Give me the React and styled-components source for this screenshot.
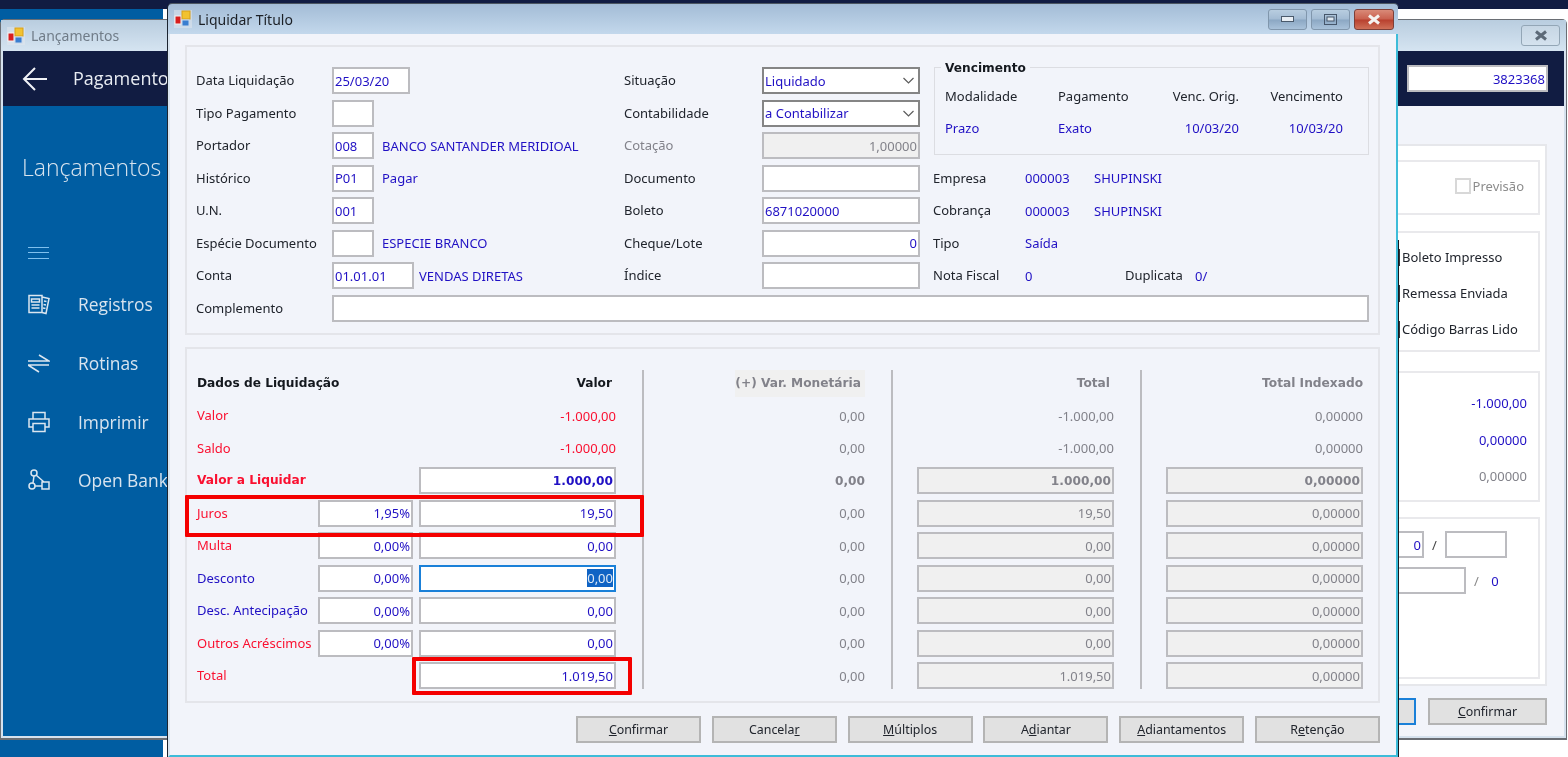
import React from "react";
import styled, { createGlobalStyle, css } from "styled-components";

const BLUE_TEXT = "#2010c4";
const RED_TEXT = "#fa1030";
const GREY_TEXT = "#82828a";
const DARK_TEXT = "#20242c";

const boldText = css`
  font-family: "DejaVu Sans", sans-serif;
  font-size: 12.2px;
  font-weight: 700;
`;

const GlobalStyle = createGlobalStyle`
  html, body {
    margin: 0;
    padding: 0;
    background: #fff;
  }
  body {
    font-family: "Noto Sans", "DejaVu Sans", sans-serif;
    font-size: 13px;
    color: ${DARK_TEXT};
  }
`;

const Desktop = styled.div`
  position: relative;
  width: 1568px;
  height: 757px;
  overflow: hidden;
  display: flex;
  flex-direction: column;
  background: #fff;
  filter: blur(0.35px);
`;

const TopBand = styled.div`
  height: 9px;
  background: #111c42;
`;

const BlueFill = styled.div`
  flex: 1;
  width: 163px;
  background: #005da2;
`;

/* ---- janela de trás ---- */

const BackWindow = styled.div`
  position: absolute;
  left: 0;
  top: 19px;
  width: 1567px;
  height: 721px;
  box-sizing: border-box;
  display: flex;
  flex-direction: column;
  border: 1px solid #6a6e74;
  border-bottom-width: 2px;
  border-radius: 5px 5px 0 0;
  background: #d6e2ee;
  padding: 0 2px 2px;
`;

const BackTitleBar = styled.div`
  height: 31px;
  margin: 0 -2px;
  padding: 0 6px 0 6px;
  display: flex;
  align-items: center;
  gap: 6px;
  background: linear-gradient(#b9cddf, #d5e4f1);
  color: #707c88;
  font-size: 14px;
`;

const WinButton = styled.div`
  width: ${(p) => p.$w || 39}px;
  height: 21px;
  box-sizing: border-box;
  display: flex;
  align-items: center;
  justify-content: center;
  border: 1px solid #8096ac;
  border-radius: 3px;
  background: linear-gradient(#b8cde0 0, #a3bbd3 48%, #8ba7c3 52%, #a9c2da 100%);
`;

const CloseButton = styled(WinButton)`
  border-color: #7d3f38;
  background: linear-gradient(#d98a78 0, #c9604e 48%, #b8402e 52%, #cf7058 100%);
`;

const InactiveButton = styled(WinButton)`
  border-color: #93a6b6;
  background: linear-gradient(#c6d6e4, #d4e2ee);
`;

const BackHeader = styled.div`
  height: 55px;
  flex: none;
  padding: 0 16px 0 19px;
  display: flex;
  align-items: center;
  background: #111c42;
  color: #e8ecf2;
`;

const BackHeaderTitle = styled.div`
  margin: -2px 0 0 25px;
  font-family: "Open Sans", sans-serif;
  font-size: 18px;
  flex: 1;
`;

const Sidebar = styled.div`
  width: 300px;
  flex: none;
  box-sizing: border-box;
  padding: 44px 0 0 19px;
  background: #005da2;
  color: #d8e4ef;
`;

const SidebarTitle = styled.div`
  font-family: "Open Sans", sans-serif;
  font-weight: 300;
  font-size: 23px;
  line-height: 34px;
`;

const MenuBars = styled.div`
  margin: 63px 0 16px 6px;
  width: 21px;
  height: 12px;
  border-top: 1px solid #7fc0ee;
  border-bottom: 1px solid #7fc0ee;
  box-sizing: border-box;
  position: relative;
  &::after {
    content: "";
    position: absolute;
    left: 0;
    right: 0;
    top: 4px;
    height: 1px;
    background: #7fc0ee;
  }
`;

const MenuItem = styled.div`
  height: 58.7px;
  display: flex;
  align-items: center;
  gap: 28px;
  padding-left: 6px;
  font-family: "Open Sans", sans-serif;
  font-size: 17.4px;
`;

const BackBody = styled.div`
  flex: 1;
  display: flex;
  min-height: 0;
`;

const BackContent = styled.div`
  flex: 1;
  min-width: 0;
  box-sizing: border-box;
  padding: 38px 17px 0 0;
  display: flex;
  flex-direction: column;
  align-items: flex-end;
  background: #f2f4fa;
`;

const WhitePanel = styled.div`
  width: 400px;
  height: 542px;
  box-sizing: border-box;
  border: 2px solid #e6e7eb;
  background: #fff;
  padding: 14px 5px 0 0;
  display: flex;
  flex-direction: column;
`;

const WhiteGroup = styled.div`
  height: ${(p) => p.$h}px;
  margin-bottom: ${(p) => p.$mb || 0}px;
  box-sizing: border-box;
  border: 2px solid #e9e9ec;
  flex: none;
`;

const PrevisaoRow = styled.div`
  height: 100%;
  box-sizing: border-box;
  display: flex;
  justify-content: flex-end;
  align-items: center;
  gap: 2px;
  padding: 0 14px 4px 0;
  color: #8c8c8c;
`;

const PrevisaoBox = styled.div`
  width: 16px;
  height: 16px;
  box-sizing: border-box;
  border: 2px solid #d8d8d8;
`;

const CheckRow = styled.div`
  height: 36px;
  display: flex;
  align-items: center;
  padding-left: 233px;
  &:first-child {
    margin-top: 6px;
  }
`;

const CheckEdge = styled.div`
  width: 14px;
  height: 17px;
  margin-right: 2px;
  border-right: 2px solid #2e3238;
`;

const AmountRow = styled.div`
  height: 36.5px;
  display: flex;
  align-items: center;
  justify-content: flex-end;
  padding-right: 11px;
  color: ${(p) => p.$color};
  &:first-child {
    margin-top: 12px;
  }
`;

const ParcelRow = styled.div`
  display: flex;
  align-items: center;
  justify-content: flex-end;
  height: 27px;
  margin-top: ${(p) => p.$mt}px;
  padding-right: ${(p) => p.$pr}px;
`;

const Slash = styled.div`
  width: ${(p) => p.$w}px;
  text-align: center;
  color: ${(p) => p.$color || "#444"};
`;

const BackFooter = styled.div`
  display: flex;
  gap: 12px;
  margin-top: 12px;
`;

/* ---- diálogo ---- */

const Dialog = styled.div`
  position: absolute;
  left: 167px;
  top: 3px;
  width: 1232px;
  height: 754px;
  box-sizing: border-box;
  display: flex;
  flex-direction: column;
  padding-right: 1px;
  border-left: 1px solid #1b2430;
  border-top: 1px solid #4a5560;
  border-radius: 5px 5px 0 0;
  background: linear-gradient(transparent 236px, #14181e 236px);
`;

const TitleBar = styled.div`
  height: 30px;
  flex: none;
  padding: 0 4px 0 6px;
  display: flex;
  align-items: center;
  gap: 6px;
  border-radius: 4px 4px 0 0;
  background: linear-gradient(#a3bcd6, #c3d8ec);
  font-size: 14px;
  color: #1c2026;
`;

const TitleText = styled.div`
  flex: 1;
`;

const TitleButtons = styled.div`
  display: flex;
  gap: 4px;
`;

const DialogBody = styled.div`
  flex: 1;
  min-height: 0;
  box-sizing: border-box;
  padding: 11px 16px 0 15px;
  border-left: 2px solid #d9e5f0;
  border-right: 2px solid #3dbcd9;
  border-bottom: 2px solid #3dbcd9;
  background: #f2f4fa;
  display: flex;
  flex-direction: column;
`;

const Panel = styled.div`
  position: relative;
  flex: none;
  box-sizing: border-box;
  border: 2px solid #e4e5ea;
`;

const UpperPanel = styled(Panel)`
  height: 290px;
  padding: 20px 0 0 9px;
`;

const LowerPanel = styled(Panel)`
  height: 356px;
  margin-top: 12px;
  padding: 20.5px 0 0 10px;
`;

const TopColumns = styled.div`
  display: flex;
`;

const FormColumn = styled.div`
  width: ${(p) => p.$w}px;
  flex: none;
  display: flex;
  flex-direction: column;
  gap: 5.5px;
`;

const FormRow = styled.div`
  height: 27px;
  display: flex;
  align-items: center;
`;

const ComplementRow = styled(FormRow)`
  margin-top: 5.5px;
  width: 1173px;
`;

const FormLabel = styled.div`
  width: ${(p) => p.$w}px;
  flex: none;
  margin-top: -1px;
  white-space: nowrap;
  color: ${(p) => p.$color || DARK_TEXT};
`;

const Field = styled.div`
  width: ${(p) => (p.$w ? `${p.$w}px` : "auto")};
  flex: ${(p) => (p.$w ? "none" : 1)};
  margin-left: ${(p) => p.$ml || 0}px;
  height: 27px;
  box-sizing: border-box;
  display: flex;
  align-items: center;
  justify-content: ${(p) => (p.$right ? "flex-end" : "flex-start")};
  padding: 0 1px;
  border: 2px solid ${(p) => (p.$focus ? "#1a80d8" : "#bcbcc0")};
  background: ${(p) => (p.$off ? "#f0f0f0" : "#fff")};
  color: ${(p) => (p.$off ? GREY_TEXT : BLUE_TEXT)};
  white-space: nowrap;
  ${(p) => p.$bold && boldText}
`;

const Selected = styled.span`
  background: #0f63c4;
  color: #dfeaf6;
`;

const Combo = styled(Field)`
  border-color: #858585;
  justify-content: space-between;
`;

const ComboArrow = styled.svg`
  width: 11px;
  height: 7px;
  margin-right: 3px;
`;

const FieldNote = styled.div`
  margin-left: ${(p) => p.$ml}px;
  color: ${BLUE_TEXT};
  white-space: nowrap;
`;

const GroupBox = styled.div`
  position: relative;
  height: 88px;
  margin-bottom: 4px;
  margin-left: 1px;
  box-sizing: border-box;
  border: 1px solid #dcdde2;
  padding: 14px 0 0 10px;
  display: grid;
  grid-template-columns: 113px 67px 114px 104px;
  grid-auto-rows: 27px;
  row-gap: 5.5px;
  align-items: center;
`;

const GroupTitle = styled.div`
  ${boldText}
  position: absolute;
  left: 6px;
  top: -7px;
  padding: 0 4px;
  background: #f2f4fa;
  color: #14181e;
`;

const GroupCell = styled.div`
  text-align: ${(p) => (p.$right ? "right" : "left")};
  color: ${(p) => p.$color || DARK_TEXT};
  white-space: nowrap;
`;

const InfoValue = styled.div`
  width: ${(p) => p.$w}px;
  flex: none;
  color: ${BLUE_TEXT};
  white-space: nowrap;
`;

const LowerColumns = styled.div`
  display: flex;
`;

const DataColumn = styled.div`
  width: 249px;
  flex: none;
  box-sizing: border-box;
  padding: 0 26px 0 24px;
  border-left: 2px solid #bcbcc0;
  display: flex;
  flex-direction: column;
  gap: 5.5px;
`;

const FirstColumn = styled(DataColumn)`
  width: 445px;
  padding: 0 26px 0 0;
  border-left: none;
`;

const DataRow = styled.div`
  height: 27px;
  display: flex;
  align-items: center;
  justify-content: flex-end;
  color: ${(p) => p.$color || GREY_TEXT};
  ${(p) => p.$bold && boldText}
`;

const RowGrow = styled.div`
  flex: 1;
  margin-top: -1px;
  white-space: nowrap;
  color: ${(p) => p.$color};
  ${(p) => p.$bold && boldText}
`;

const ValueHead = styled.div`
  ${boldText}
  padding-right: 4px;
  color: ${(p) => p.$color || "#14181e"};
`;

const VarHead = styled.div`
  height: 27px;
  display: flex;
  align-items: center;
  padding: 0 4px 0 0;
  background: #f0f0f0;
`;

const RedBox = styled.div`
  position: absolute;
  left: ${(p) => p.$x}px;
  top: ${(p) => p.$y}px;
  width: ${(p) => p.$w}px;
  height: ${(p) => p.$h}px;
  box-sizing: border-box;
  border: 4px solid #f40000;
  border-radius: 1px;
`;

const ButtonBar = styled.div`
  margin-top: 13px;
  display: flex;
  justify-content: space-between;
  padding-left: 391px;
`;

const ActionButton = styled.button`
  width: ${(p) => p.$w || 125}px;
  height: 27px;
  padding: 0;
  box-sizing: border-box;
  border: 2px solid ${(p) => (p.$focus ? "#1a80d8" : "#b4b4b4")};
  background: #e1e1e1;
  color: #20242c;
  font-family: inherit;
  font-size: 12.4px;
`;

const AppIcon = () => (
  <svg width="18" height="18" viewBox="0 0 18 18">
    <rect x="0" y="0" width="18" height="18" fill="#e4e8ee" opacity="0.5" />
    <rect x="1" y="6" width="6" height="8" fill="#d81e1e" stroke="#f4f4f4" />
    <rect x="8" y="1" width="8" height="8" fill="#f2c230" stroke="#d8a018" />
    <rect x="8" y="10" width="7" height="6" fill="#3a7ed0" stroke="#c8d8ec" />
  </svg>
);

const CloseGlyph = ({ color }) => (
  <svg width="14" height="11" viewBox="0 0 14 11">
    <path d="M2 1.5L12 9.5M12 1.5L2 9.5" stroke={color} strokeWidth="3" />
  </svg>
);

const MinGlyph = () => (
  <svg width="13" height="6" viewBox="0 0 13 6">
    <rect x="0.5" y="0.5" width="12" height="5" fill="#e8eef4" stroke="#4a5a6c" />
  </svg>
);

const MaxGlyph = () => (
  <svg width="13" height="11" viewBox="0 0 13 11">
    <rect x="0.5" y="0.5" width="12" height="10" fill="none" stroke="#46566a" />
    <rect x="3" y="3" width="7" height="4" fill="#dfe8f0" stroke="#46566a" />
  </svg>
);

const BackArrow = () => (
  <svg width="26" height="26" viewBox="0 0 26 26" fill="none" stroke="#f0f2f6" strokeWidth="2">
    <path d="M25 13H2M13 2L2 13l11 11" />
  </svg>
);

const iconProps = {
  width: 22,
  height: 22,
  viewBox: "0 0 22 22",
  fill: "none",
  stroke: "#dbe6f0",
  strokeWidth: 1.5,
};

const RegistrosIcon = () => (
  <svg {...iconProps}>
    <path d="M1 2.5h13v17H1zM14 4l7 1.5-3 15-4-1" />
    <path d="M3.5 6h8v3h-8zM3.5 12h8M3.5 15h8M16 8l2.5.5M15.5 11.5l2.5.5M15 15l2.5.5" />
  </svg>
);

const RotinasIcon = () => (
  <svg {...iconProps}>
    <path d="M0 9h21L11 3M21 13H0l11 7" />
  </svg>
);

const ImprimirIcon = () => (
  <svg {...iconProps}>
    <path d="M5 8V1.5h12V8M5 16H1V8h20v8h-4" />
    <path d="M5 12.5h12v8H5z" />
  </svg>
);

const OpenBankIcon = () => (
  <svg {...iconProps}>
    <circle cx="6" cy="4" r="3" />
    <circle cx="4" cy="17" r="3" />
    <path d="M7 17h7M14 13h7v7h-7zM8 6l8 7M6 7l-1 7" />
  </svg>
);

const Chevron = () => (
  <ComboArrow viewBox="0 0 11 7" fill="none" stroke="#5c5c5c" strokeWidth="1.2">
    <path d="M0.5 1l5 5 5-5" />
  </ComboArrow>
);

const leftRows = [
  { label: "Data Liquidação", value: "25/03/20", w: 78 },
  { label: "Tipo Pagamento", value: "", w: 42 },
  { label: "Portador", value: "008", w: 42, note: "BANCO SANTANDER MERIDIOAL", ml: 8 },
  { label: "Histórico", value: "P01", w: 42, note: "Pagar", ml: 8 },
  { label: "U.N.", value: "001", w: 42 },
  { label: "Espécie Documento", value: "", w: 42, note: "ESPECIE BRANCO", ml: 8 },
  { label: "Conta", value: "01.01.01", w: 82, note: "VENDAS DIRETAS", ml: 5 },
];

const sideRows = [
  { label: "Juros", color: RED_TEXT, pct: "1,95%", value: "19,50", total: "19,50" },
  { label: "Multa", color: RED_TEXT, pct: "0,00%", value: "0,00", total: "0,00" },
  { label: "Desconto", color: BLUE_TEXT, pct: "0,00%", value: "0,00", total: "0,00", focus: true },
  { label: "Desc. Antecipação", color: BLUE_TEXT, pct: "0,00%", value: "0,00", total: "0,00" },
  { label: "Outros Acréscimos", color: RED_TEXT, pct: "0,00%", value: "0,00", total: "0,00" },
];

const OffFieldRow = ({ value, bold }) => (
  <DataRow>
    <Field $off $right $bold={bold}>
      {value}
    </Field>
  </DataRow>
);

const BackWindowView = () => (
  <BackWindow>
    <BackTitleBar>
      <AppIcon />
      <TitleText>Lançamentos</TitleText>
      <InactiveButton>
        <CloseGlyph color="#5c6a78" />
      </InactiveButton>
    </BackTitleBar>
    <BackHeader>
      <BackArrow />
      <BackHeaderTitle>Pagamentos</BackHeaderTitle>
      <Field $w={141} $right>
        3823368
      </Field>
    </BackHeader>
    <BackBody>
      <Sidebar>
        <SidebarTitle>Lançamentos</SidebarTitle>
        <MenuBars />
        <MenuItem>
          <RegistrosIcon />
          Registros
        </MenuItem>
        <MenuItem>
          <RotinasIcon />
          Rotinas
        </MenuItem>
        <MenuItem>
          <ImprimirIcon />
          Imprimir
        </MenuItem>
        <MenuItem>
          <OpenBankIcon />
          Open Banking
        </MenuItem>
      </Sidebar>
      <BackContent>
        <WhitePanel>
          <WhiteGroup $h={55} $mb={16}>
            <PrevisaoRow>
              <PrevisaoBox />
              Previsão
            </PrevisaoRow>
          </WhiteGroup>
          <WhiteGroup $h={121} $mb={19}>
            <CheckRow>
              <CheckEdge />
              Boleto Impresso
            </CheckRow>
            <CheckRow>
              <CheckEdge />
              Remessa Enviada
            </CheckRow>
            <CheckRow>
              <CheckEdge />
              Código Barras Lido
            </CheckRow>
          </WhiteGroup>
          <WhiteGroup $h={131} $mb={15}>
            <AmountRow $color={BLUE_TEXT}>-1.000,00</AmountRow>
            <AmountRow $color={BLUE_TEXT}>0,00000</AmountRow>
            <AmountRow $color={GREY_TEXT}>0,00000</AmountRow>
          </WhiteGroup>
          <WhiteGroup $h={162}>
            <ParcelRow $mt={12} $pr={31}>
              <Field $w={100} $right>
                0
              </Field>
              <Slash $w={21}>/</Slash>
              <Field $w={62} />
            </ParcelRow>
            <ParcelRow $mt={9} $pr={35}>
              <Field $w={100} />
              <Slash $w={21} $color="#888">
                /
              </Slash>
              <Slash $w={16} $color={BLUE_TEXT}>
                0
              </Slash>
            </ParcelRow>
          </WhiteGroup>
        </WhitePanel>
        <BackFooter>
          <ActionButton $w={119} $focus />
          <ActionButton $w={119}>
            <u>C</u>onfirmar
          </ActionButton>
        </BackFooter>
      </BackContent>
    </BackBody>
  </BackWindow>
);

const App = () => (
  <Desktop>
    <GlobalStyle />
    <TopBand />
    <BlueFill />
    <BackWindowView />
    <Dialog>
      <TitleBar>
        <AppIcon />
        <TitleText>Liquidar Título</TitleText>
        <TitleButtons>
          <WinButton>
            <MinGlyph />
          </WinButton>
          <WinButton>
            <MaxGlyph />
          </WinButton>
          <CloseButton $w={40}>
            <CloseGlyph color="#f4f2f0" />
          </CloseButton>
        </TitleButtons>
      </TitleBar>
      <DialogBody>
        <UpperPanel>
          <TopColumns>
            <FormColumn $w={428}>
              {leftRows.map((row) => (
                <FormRow key={row.label}>
                  <FormLabel $w={136}>{row.label}</FormLabel>
                  <Field $w={row.w}>{row.value}</Field>
                  {row.note && <FieldNote $ml={row.ml}>{row.note}</FieldNote>}
                </FormRow>
              ))}
            </FormColumn>
            <FormColumn $w={309}>
              <FormRow>
                <FormLabel $w={138}>Situação</FormLabel>
                <Combo $w={158}>
                  Liquidado
                  <Chevron />
                </Combo>
              </FormRow>
              <FormRow>
                <FormLabel $w={138}>Contabilidade</FormLabel>
                <Combo $w={158}>
                  a Contabilizar
                  <Chevron />
                </Combo>
              </FormRow>
              <FormRow>
                <FormLabel $w={138} $color={GREY_TEXT}>
                  Cotação
                </FormLabel>
                <Field $w={158} $off $right>
                  1,00000
                </Field>
              </FormRow>
              <FormRow>
                <FormLabel $w={138}>Documento</FormLabel>
                <Field $w={158} />
              </FormRow>
              <FormRow>
                <FormLabel $w={138}>Boleto</FormLabel>
                <Field $w={158}>6871020000</Field>
              </FormRow>
              <FormRow>
                <FormLabel $w={138}>Cheque/Lote</FormLabel>
                <Field $w={158} $right>
                  0
                </Field>
              </FormRow>
              <FormRow>
                <FormLabel $w={138}>Índice</FormLabel>
                <Field $w={158} />
              </FormRow>
            </FormColumn>
            <FormColumn $w={436}>
              <GroupBox>
                <GroupTitle>Vencimento</GroupTitle>
                <GroupCell>Modalidade</GroupCell>
                <GroupCell>Pagamento</GroupCell>
                <GroupCell $right>Venc. Orig.</GroupCell>
                <GroupCell $right>Vencimento</GroupCell>
                <GroupCell $color={BLUE_TEXT}>Prazo</GroupCell>
                <GroupCell $color={BLUE_TEXT}>Exato</GroupCell>
                <GroupCell $right $color={BLUE_TEXT}>
                  10/03/20
                </GroupCell>
                <GroupCell $right $color={BLUE_TEXT}>
                  10/03/20
                </GroupCell>
              </GroupBox>
              <FormRow>
                <FormLabel $w={92}>Empresa</FormLabel>
                <InfoValue $w={69}>000003</InfoValue>
                <InfoValue $w={120}>SHUPINSKI</InfoValue>
              </FormRow>
              <FormRow>
                <FormLabel $w={92}>Cobrança</FormLabel>
                <InfoValue $w={69}>000003</InfoValue>
                <InfoValue $w={120}>SHUPINSKI</InfoValue>
              </FormRow>
              <FormRow>
                <FormLabel $w={92}>Tipo</FormLabel>
                <InfoValue $w={69}>Saída</InfoValue>
              </FormRow>
              <FormRow>
                <FormLabel $w={92}>Nota Fiscal</FormLabel>
                <InfoValue $w={100}>0</InfoValue>
                <FormLabel $w={70}>Duplicata</FormLabel>
                <InfoValue $w={30}>0/</InfoValue>
              </FormRow>
            </FormColumn>
          </TopColumns>
          <ComplementRow>
            <FormLabel $w={136}>Complemento</FormLabel>
            <Field />
          </ComplementRow>
        </UpperPanel>
        <LowerPanel>
          <LowerColumns>
            <FirstColumn>
              <DataRow>
                <RowGrow $bold $color="#14181e">
                  Dados de Liquidação
                </RowGrow>
                <ValueHead>Valor</ValueHead>
              </DataRow>
              <DataRow $color={RED_TEXT}>
                <RowGrow>Valor</RowGrow>
                -1.000,00
              </DataRow>
              <DataRow $color={RED_TEXT}>
                <RowGrow>Saldo</RowGrow>
                -1.000,00
              </DataRow>
              <DataRow>
                <RowGrow $bold $color={RED_TEXT}>
                  Valor a Liquidar
                </RowGrow>
                <Field $w={197} $right $bold>
                  1.000,00
                </Field>
              </DataRow>
              {sideRows.map((row) => (
                <DataRow key={row.label}>
                  <RowGrow $color={row.color}>{row.label}</RowGrow>
                  <Field $w={95} $right>
                    {row.pct}
                  </Field>
                  <Field $w={197} $ml={6} $right $focus={row.focus}>
                    {row.focus ? <Selected>{row.value}</Selected> : row.value}
                  </Field>
                </DataRow>
              ))}
              <DataRow>
                <RowGrow $color={RED_TEXT}>Total</RowGrow>
                <Field $w={197} $right>
                  1.019,50
                </Field>
              </DataRow>
            </FirstColumn>
            <DataColumn>
              <DataRow $bold>
                <VarHead>(+) Var. Monetária</VarHead>
              </DataRow>
              <DataRow>0,00</DataRow>
              <DataRow>0,00</DataRow>
              <DataRow $bold>0,00</DataRow>
              <DataRow>0,00</DataRow>
              <DataRow>0,00</DataRow>
              <DataRow>0,00</DataRow>
              <DataRow>0,00</DataRow>
              <DataRow>0,00</DataRow>
              <DataRow>0,00</DataRow>
            </DataColumn>
            <DataColumn>
              <DataRow>
                <ValueHead $color={GREY_TEXT}>Total</ValueHead>
              </DataRow>
              <DataRow>-1.000,00</DataRow>
              <DataRow>-1.000,00</DataRow>
              <OffFieldRow value="1.000,00" bold />
              {sideRows.map((row) => (
                <OffFieldRow key={row.label} value={row.total} />
              ))}
              <OffFieldRow value="1.019,50" />
            </DataColumn>
            <DataColumn>
              <DataRow $bold>Total Indexado</DataRow>
              <DataRow>0,00000</DataRow>
              <DataRow>0,00000</DataRow>
              <OffFieldRow value="0,00000" bold />
              {sideRows.map((row) => (
                <OffFieldRow key={row.label} value="0,00000" />
              ))}
              <OffFieldRow value="0,00000" />
            </DataColumn>
          </LowerColumns>
          <RedBox $x={-2} $y={146} $w={459} $h={42} />
          <RedBox $x={225} $y={308} $w={220} $h={38} />
        </LowerPanel>
        <ButtonBar>
          <ActionButton>
            <u>C</u>onfirmar
          </ActionButton>
          <ActionButton>
            Cancela<u>r</u>
          </ActionButton>
          <ActionButton>
            <u>M</u>últiplos
          </ActionButton>
          <ActionButton>
            A<u>d</u>iantar
          </ActionButton>
          <ActionButton>
            <u>A</u>diantamentos
          </ActionButton>
          <ActionButton>
            R<u>e</u>tenção
          </ActionButton>
        </ButtonBar>
      </DialogBody>
    </Dialog>
  </Desktop>
);

export default App;
